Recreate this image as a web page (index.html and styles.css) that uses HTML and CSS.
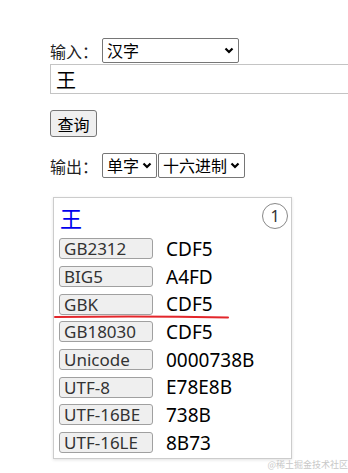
FILE: index.html
```html
<!DOCTYPE html>
<html lang="zh">
<head>
    <meta charset="UTF-8">
    <meta name="viewport" content="width=device-width, initial-scale=1.0">
    <link rel="stylesheet" href="styles.css">
    <title>汉字编码查询</title>
</head>
<body class="main">

<div class="page">
    <div class="line">
        <label class="caption">输入：</label>
        <span class="pick-box pick-wide">
            <select class="pick"><option>汉字</option></select>
            <svg class="arrow" width="10" height="7" viewBox="0 0 10 7"><path d="M1.5 1.5 L5 5 L8.5 1.5" stroke="#000" stroke-width="2.2" fill="none"/></svg>
        </span>
    </div>
    <input class="word" type="text" value="王">

    <button class="query">查询</button>

    <div class="line">
        <label class="caption">输出：</label>
        <span class="pick-box pick-mode">
            <select class="pick"><option>单字</option></select>
            <svg class="arrow" width="10" height="7" viewBox="0 0 10 7"><path d="M1.5 1.5 L5 5 L8.5 1.5" stroke="#000" stroke-width="2.2" fill="none"/></svg>
        </span>
        <span class="pick-box pick-base">
            <select class="pick"><option>十六进制</option></select>
            <svg class="arrow" width="10" height="7" viewBox="0 0 10 7"><path d="M1.5 1.5 L5 5 L8.5 1.5" stroke="#000" stroke-width="2.2" fill="none"/></svg>
        </span>
    </div>

    <div class="card">
        <div class="card-head">
            <span class="char">王</span>
            <span class="count">1</span>
        </div>
        <div class="enc"><span class="enc-name">GB2312</span><span class="enc-val">CDF5</span></div>
        <div class="enc"><span class="enc-name">BIG5</span><span class="enc-val">A4FD</span></div>
        <div class="enc"><span class="enc-name">GBK</span><span class="enc-val">CDF5</span></div>
        <div class="enc"><span class="enc-name">GB18030</span><span class="enc-val">CDF5</span></div>
        <div class="enc"><span class="enc-name">Unicode</span><span class="enc-val">0000738B</span></div>
        <div class="enc"><span class="enc-name">UTF-8</span><span class="enc-val">E78E8B</span></div>
        <div class="enc"><span class="enc-name">UTF-16BE</span><span class="enc-val">738B</span></div>
        <div class="enc"><span class="enc-name">UTF-16LE</span><span class="enc-val">8B73</span></div>

        <!-- hand drawn mark under GBK -->
        <svg class="mark" width="175" height="5" viewBox="0 0 175 5">
            <path d="M1 3 Q 90 2 174 3.4" stroke="#e3262b" stroke-width="2" fill="none" stroke-linecap="round"/>
        </svg>
    </div>
</div>

<div class="stamp">@稀土掘金技术社区</div>

</body>
</html>
```

FILE: styles.css
```css
html {
    overflow: hidden;
}

.main {
    margin: 0;
    background-color: #fff;
    color: #000;
    font-family: "Noto Sans", "Noto Sans CJK SC", sans-serif;
    position: relative;
    height: 473px;
}

.page {
    padding: 38px 0 0 50px;
    display: flex;
    flex-direction: column;
    align-items: flex-start;
}

.line {
    display: flex;
    align-items: center;
    height: 25px;
}

.caption {
    width: 52px;
    font-family: "Noto Sans CJK SC", sans-serif;
    font-size: 16px;
    color: #222;
}

.pick-box {
    position: relative;
    display: block;
    height: 25px;
}

.pick {
    appearance: none;
    -webkit-appearance: none;
    display: block;
    width: 100%;
    height: 25px;
    box-sizing: border-box;
    font-family: "Noto Sans CJK SC", sans-serif;
    font-size: 16px;
    line-height: 23px;
    border: 1px solid #767676;
    border-radius: 2px;
    background-color: #fff;
    color: #000;
    padding: 0 0 0 4px;
    margin: 0;
}

.arrow {
    position: absolute;
    right: 5px;
    top: 9px;
    pointer-events: none;
}

.pick-wide {
    width: 137px;
}

.pick-mode {
    width: 55px;
    margin-right: 1px;
}

.pick-base {
    width: 87px;
}

.word {
    margin: 1px 0 0 0;
    width: 299px;
    height: 30px;
    box-sizing: border-box;
    border: 1px solid #c4c4c4;
    border-right: none;
    padding: 0 5px;
    font-family: "Noto Sans CJK SC", sans-serif;
    font-size: 20px;
    color: #000;
}

.query {
    margin: 16px 0 16px 0;
    width: 47px;
    height: 27px;
    padding: 0;
    font-family: "Noto Sans CJK SC", sans-serif;
    font-size: 16px;
    background-color: #efefef;
    border: 1px solid #767676;
    border-radius: 3px;
    color: #000;
}

.card {
    position: relative;
    margin: 19px 0 0 3px;
    width: 239px;
    height: 262px;
    box-sizing: border-box;
    border: 1px solid #ccc;
    box-shadow: 0 1px 3px rgba(0, 0, 0, 0.12);
    padding: 4px 5px 0 5px;
}

.card-head {
    display: flex;
    justify-content: space-between;
    align-items: flex-start;
    height: 33px;
}

.char {
    font-family: "Noto Sans CJK SC", sans-serif;
    font-size: 22px;
    line-height: 30px;
    color: #0000ee;
    margin-left: 1px;
}

.count {
    width: 24px;
    height: 24px;
    margin-top: 1px;
    margin-right: -2px;
    border: 1px solid #888;
    border-radius: 50%;
    display: flex;
    align-items: center;
    justify-content: center;
    font-size: 16px;
    color: #333;
}

.enc {
    display: flex;
    align-items: center;
    height: 27.7px;
}

.enc-name {
    width: 94px;
    height: 21px;
    box-sizing: border-box;
    border: 1px solid #a0a0a0;
    border-radius: 3px;
    background-color: #efefef;
    padding-left: 4px;
    font-size: 17px;
    line-height: 19px;
    color: #333;
    white-space: nowrap;
}

.enc-val {
    margin-left: 13px;
    font-size: 19px;
    color: #000;
}

.mark {
    position: absolute;
    left: 0;
    top: 116px;
}

.stamp {
    position: absolute;
    right: 0;
    top: 458px;
    font-family: "Noto Sans CJK SC", sans-serif;
    font-size: 9px;
    color: #c8c8c8;
}
```
